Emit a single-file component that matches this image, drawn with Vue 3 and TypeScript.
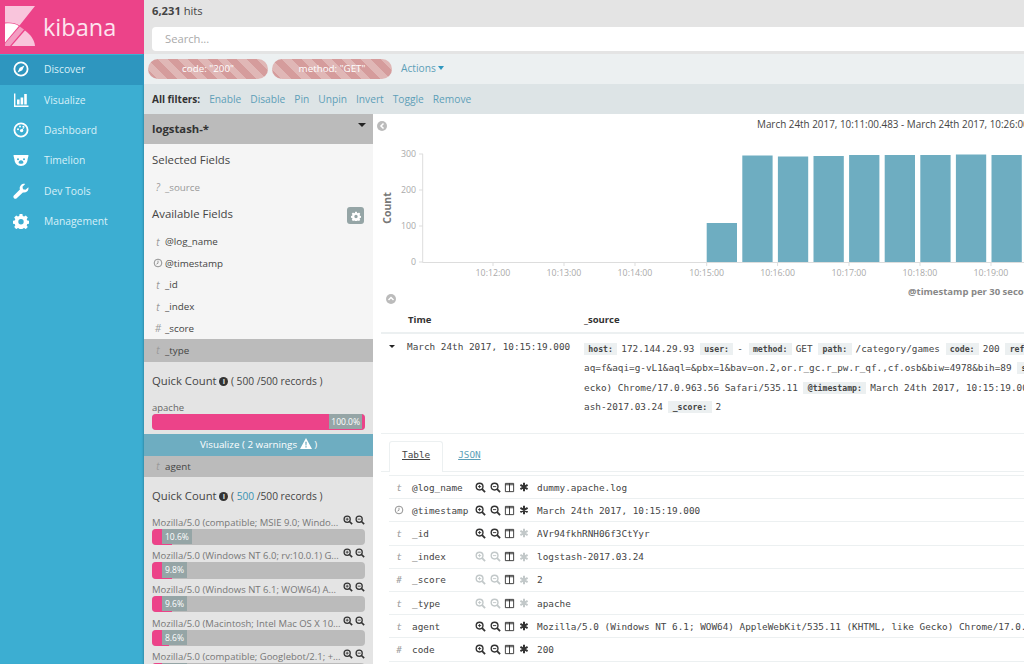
<script setup lang="ts">
const nav = [
  { label: 'Discover', icon: 'i-compass', active: true },
  { label: 'Visualize', icon: 'i-bars', active: false },
  { label: 'Dashboard', icon: 'i-dash', active: false },
  { label: 'Timelion', icon: 'i-bear', active: false },
  { label: 'Dev Tools', icon: 'i-wrench', active: false },
  { label: 'Management', icon: 'i-gear', active: false },
]
const fields = [
  { t: 't', name: '@log_name' },
  { t: 'clock', name: '@timestamp' },
  { t: 't', name: '_id' },
  { t: 't', name: '_index' },
  { t: '#', name: '_score' },
]
const agents = [
  { label: 'Mozilla/5.0 (compatible; MSIE 9.0; Windo...', pct: 10.6, w: 20 },
  { label: 'Mozilla/5.0 (Windows NT 6.0; rv:10.0.1) G...', pct: 9.8, w: 20 },
  { label: 'Mozilla/5.0 (Windows NT 6.1; WOW64) A...', pct: 9.6, w: 20 },
  { label: 'Mozilla/5.0 (Macintosh; Intel Mac OS X 10...', pct: 8.6, w: 17 },
  { label: 'Mozilla/5.0 (compatible; Googlebot/2.1; +...', pct: 8.2, w: 17 },
]
const barData = [
  { x: 706.7, top: 223 },
  { x: 742.3, top: 155.5 },
  { x: 777.9, top: 156.5 },
  { x: 813.5, top: 156 },
  { x: 849.1, top: 155 },
  { x: 884.7, top: 155 },
  { x: 920.3, top: 155 },
  { x: 955.9, top: 154.5 },
  { x: 991.5, top: 155 },
]
const xTicks = [
  { x: 493, l: '10:12:00' },
  { x: 564, l: '10:13:00' },
  { x: 635, l: '10:14:00' },
  { x: 706.7, l: '10:15:00' },
  { x: 777.6, l: '10:16:00' },
  { x: 849, l: '10:17:00' },
  { x: 920, l: '10:18:00' },
  { x: 991, l: '10:19:00' },
]
const yTicks = [
  { y: 154, l: '300' },
  { y: 190, l: '200' },
  { y: 226, l: '100' },
  { y: 262, l: '0' },
]
const rows = [
  { t: 't', name: '@log_name', v: 'dummy.apache.log', zoom: true, star: true },
  { t: 'clock', name: '@timestamp', v: 'March 24th 2017, 10:15:19.000', zoom: true, star: true },
  { t: 't', name: '_id', v: 'AVr94fkhRNH06f3CtYyr', zoom: true, star: false },
  { t: 't', name: '_index', v: 'logstash-2017.03.24', zoom: false, star: false },
  { t: '#', name: '_score', v: '2', zoom: false, star: false },
  { t: 't', name: '_type', v: 'apache', zoom: false, star: false },
  { t: 't', name: 'agent', v: 'Mozilla/5.0 (Windows NT 6.1; WOW64) AppleWebKit/535.11 (KHTML, like Gecko) Chrome/17.0.963.56 Safari/535.11', zoom: true, star: true },
  { t: '#', name: 'code', v: '200', zoom: true, star: true },
]
</script>

<template>
  <svg class="sprite" width="0" height="0" aria-hidden="true">
    <symbol id="i-compass" viewBox="0 0 16 16">
      <circle cx="8" cy="8" r="6.6" fill="none" stroke="currentColor" stroke-width="1.8" />
      <path d="M11.4 4.6 9.3 9.3 4.6 11.4 6.7 6.7Z" fill="currentColor" />
    </symbol>
    <symbol id="i-bars" viewBox="0 0 16 16">
      <path d="M1 1.5V15h14.5v-1.4H2.4V1.5Z" fill="currentColor" />
      <path d="M4 7.5h2.6v5H4ZM7.6 5.5h2.6v7H7.6ZM11.2 2h2.6v10.5h-2.6Z" fill="currentColor" />
    </symbol>
    <symbol id="i-dash" viewBox="0 0 16 16">
      <circle cx="8" cy="8" r="6.6" fill="none" stroke="currentColor" stroke-width="1.8" />
      <circle cx="8.6" cy="8.6" r="1.7" fill="currentColor" />
      <circle cx="5" cy="7.2" r="1" fill="currentColor" />
      <circle cx="7" cy="4.6" r="1" fill="currentColor" />
      <circle cx="10.4" cy="4.8" r="1" fill="currentColor" />
      <path d="M8.6 8.6 11 5.4" stroke="currentColor" stroke-width="1" />
    </symbol>
    <symbol id="i-bear" viewBox="0 0 16 16">
      <path fill-rule="evenodd" fill="currentColor" d="M1 3h14c.4 0 .6.3.5.7l-.9 3.6C14.5 11 12 14 8 14s-6.500-3-6.600-6.700L.5 3.700C.4 3.300.6 3 1 3ZM5 6.200a1 1 0 1 0 0 2 1 1 0 0 0 0-2Zm6 0a1 1 0 1 0 0 2 1 1 0 0 0 0-2ZM8 8.300c-1.500 0-2.400 1.300-2.400 2.500 0 .8 1 1 2.400 1s2.400-.2 2.400-1c0-1.200-.9-2.500-2.400-2.500Z" />
    </symbol>
    <symbol id="i-wrench" viewBox="0 0 16 16">
      <path fill="currentColor" d="M15.400 4.200c.3 1.700-.2 3.300-1.400 4.300-1.100 1-2.700 1.300-4.100.9L3.700 15.300c-.7.7-1.900.7-2.700-.1-.8-.8-.8-2-.1-2.700l6-6.100c-.5-1.500-.1-3.100 1-4.200C9 1.100 10.600.6 12.200 1L9.500 3.800l.5 2.500 2.500.5Z" />
    </symbol>
    <symbol id="i-gear" viewBox="0 0 16 16">
      <path fill="currentColor" fill-rule="evenodd" d="M6.600 1h2.800l.4 2 1.300.6 1.700-1.100 2 2-1.100 1.700.6 1.300 1.900.4v2.800l-1.900.4-.6 1.300 1.100 1.700-2 2-1.700-1.100-1.300.5-.4 2H6.600l-.4-2-1.300-.5-1.700 1.100-2-2 1.100-1.700-.6-1.300-1.900-.4V7.900l1.900-.4.6-1.300-1.100-1.700 2-2 1.700 1.100 1.300-.6ZM8 6a2.700 2.700 0 1 0 0 5.400A2.700 2.700 0 0 0 8 6Z" />
    </symbol>
    <symbol id="i-plus" viewBox="0 0 12 12">
      <circle cx="5" cy="5" r="3.700" fill="none" stroke="currentColor" stroke-width="1.500" />
      <path d="M7.800 7.800 11 11" stroke="currentColor" stroke-width="2" />
      <path d="M3.200 5h3.600M5 3.200v3.600" stroke="currentColor" stroke-width="1" />
    </symbol>
    <symbol id="i-minus" viewBox="0 0 12 12">
      <circle cx="5" cy="5" r="3.700" fill="none" stroke="currentColor" stroke-width="1.500" />
      <path d="M7.800 7.800 11 11" stroke="currentColor" stroke-width="2" />
      <path d="M3.200 5h3.600" stroke="currentColor" stroke-width="1" />
    </symbol>
    <symbol id="i-cols" viewBox="0 0 12 12">
      <path d="M1.500 1.500h9v9h-9ZM6 1.500v9M1.500 3h9" fill="none" stroke="currentColor" stroke-width="1" />
    </symbol>
    <symbol id="i-star" viewBox="0 0 12 12">
      <path d="M6 1v10M1.700 3.500l8.600 5M10.300 3.500l-8.600 5" stroke="currentColor" stroke-width="2.400" />
    </symbol>
    <symbol id="i-clock" viewBox="0 0 12 12">
      <circle cx="6" cy="6" r="4.600" fill="none" stroke="currentColor" stroke-width="1.100" />
      <path d="M6 3.200V6.300L4.200 7.300" fill="none" stroke="currentColor" stroke-width="1" />
    </symbol>
  </svg>

  <div class="app">
    <aside class="side">
      <div class="brand">
        <svg class="logo" width="40" height="54" viewBox="0 0 40 54">
          <path d="M5 6h30L19.500 25.500C16 23 11 22 5 22.500Z" fill="#f9c5dc" />
          <path d="M5 23.500C11 22.700 15.500 23.500 18.800 26L5 42.500Z" fill="#ffffff" />
          <path d="M19.800 26.500 24 29.500 10 46H5v-2.500Z" fill="#f39dc2" />
          <path d="M25 30.500C31 35 34.500 40 35 46H11.500Z" fill="#f9c5dc" />
        </svg>
        <span class="brand-name">kibana</span>
      </div>
      <nav>
        <a v-for="n in nav" :key="n.label" class="nav-item" :class="{ active: n.active }">
          <svg class="nav-ico" width="16" height="16"><use :href="'#' + n.icon" /></svg>
          <span>{{ n.label }}</span>
        </a>
      </nav>
    </aside>

    <main class="main">
      <div class="hits"><b>6,231</b> hits</div>
      <div class="search"><span>Search...</span></div>
      <div class="filters">
        <span class="pill">code: "200"</span>
        <span class="pill">method: "GET"</span>
        <span class="actions">Actions <i class="caret"></i></span>
      </div>
      <div class="allfilters">
        <b>All filters:</b>
        <a>Enable</a><a>Disable</a><a>Pin</a><a>Unpin</a><a>Invert</a><a>Toggle</a><a>Remove</a>
      </div>

      <div class="body">
        <section class="panel">
          <div class="index">logstash-* <i class="index-caret"></i></div>
          <h4 class="selected">Selected Fields</h4>
          <div class="field dim"><span class="ftype">?</span><span>_source</span></div>
          <div class="avail">
            <h4>Available Fields</h4>
            <span class="gearbtn"><svg width="10" height="10"><use href="#i-gear" /></svg></span>
          </div>
          <div v-for="f in fields" :key="f.name" class="field">
            <span class="ftype">
              <svg v-if="f.t === 'clock'" width="10" height="10"><use href="#i-clock" /></svg>
              <template v-else>{{ f.t }}</template>
            </span>
            <span>{{ f.name }}</span>
          </div>
          <div class="field open"><span class="ftype">t</span><span>_type</span></div>
          <div class="quick">
            <div class="qc"><span class="qc-t">Quick Count</span> <span class="info">i</span> ( 500 /500 records )</div>
            <div class="q-label">apache</div>
            <div class="track full"><div class="fill" style="width: 100%"></div><span class="pct">100.0%</span></div>
          </div>
          <div class="visualize">Visualize ( 2 warnings
            <svg class="warn" width="12" height="11" viewBox="0 0 12 11">
              <path fill-rule="evenodd" fill="#fff" d="M6 0 12 11H0ZM5.300 3.800l.2 3.800h1l.2-3.800ZM5.300 8.300v1.300h1.400V8.300Z" />
            </svg> )</div>
          <div class="field open agent"><span class="ftype">t</span><span>agent</span></div>
          <div class="quick q2">
            <div class="qc"><span class="qc-t">Quick Count</span> <span class="info">i</span> ( <em>500</em> /500 records )</div>
            <div v-for="a in agents" :key="a.label" class="agent-row">
              <div class="a-top">
                <span class="a-label">{{ a.label }}</span>
                <svg class="a-ico" width="10" height="10"><use href="#i-plus" /></svg>
                <svg class="a-ico" width="10" height="10"><use href="#i-minus" /></svg>
              </div>
              <div class="track">
                <div class="fill" :style="{ width: a.w + 'px' }"></div>
                <span class="pct left">{{ a.pct }}%</span>
              </div>
            </div>
          </div>
        </section>

        <section class="content">
          <div class="chart-wrap">
            <div class="range">March 24th 2017, 10:11:00.483 - March 24th 2017, 10:26:00.483</div>
            <svg class="chart" width="650" height="188" viewBox="374 114 650 188">
              <circle cx="382" cy="126" r="5" fill="#bbb" />
              <path d="M383.500 123.500 381 126l2.500 2.500" fill="none" stroke="#fff" stroke-width="1.500" />
              <rect v-for="b in barData" :key="b.x" :x="b.x" :y="b.top" width="30.300" :height="262.300 - b.top" fill="#6eadc1" />
              <path d="M422.700 154V262.500H1024" fill="none" stroke="#ddd" stroke-width="1" />
              <g v-for="t in yTicks" :key="t.y">
                <path :d="`M419 ${t.y}h4`" stroke="#ddd" />
                <text :x="416" :y="t.y + 2.500" class="tick" text-anchor="end">{{ t.l }}</text>
              </g>
              <g v-for="t in xTicks" :key="t.x">
                <path :d="`M${t.x} 262v4`" stroke="#ddd" />
                <text :x="t.x" y="275.500" class="tick" text-anchor="middle">{{ t.l }}</text>
              </g>
              <text class="ylabel" transform="translate(391 208) rotate(-90)" text-anchor="middle">Count</text>
              <text class="xlabel" x="908" y="295">@timestamp per 30 seconds</text>
            </svg>
          </div>
          <div class="collapse">
            <svg width="10" height="10" viewBox="0 0 10 10">
              <circle cx="5" cy="5" r="5" fill="#bbb" />
              <path d="M2.500 6 5 3.500 7.500 6" fill="none" stroke="#fff" stroke-width="1.500" />
            </svg>
          </div>
          <div class="thead">
            <span class="th-time">Time</span>
            <span>_source</span>
          </div>
          <div class="doc">
            <i class="row-caret"></i>
            <span class="doc-time">March 24th 2017, 10:15:19.000</span>
            <div class="doc-src">
              <div><b>host:</b> 172.144.29.93 <b>user:</b> - <b>method:</b> GET <b>path:</b> /category/games <b>code:</b> 200 <b>referer:</b> http://www.google.com/</div>
              <div>aq=f&amp;aqi=g-vL1&amp;aql=&amp;pbx=1&amp;bav=on.2,or.r_gc.r_pw.r_qf.,cf.osb&amp;biw=4978&amp;bih=89 <b>size:</b></div>
              <div>ecko) Chrome/17.0.963.56 Safari/535.11 <b>@timestamp:</b> March 24th 2017, 10:15:19.000 <b>_type:</b></div>
              <div>ash-2017.03.24 <b>_score:</b> 2</div>
            </div>
          </div>
          <div class="tabs">
            <a class="tab on">Table</a>
            <a class="tab">JSON</a>
          </div>
          <div class="drows">
            <div v-for="r in rows" :key="r.name" class="drow">
              <span class="d-type">
                <svg v-if="r.t === 'clock'" width="10" height="10"><use href="#i-clock" /></svg>
                <template v-else>{{ r.t }}</template>
              </span>
              <span class="d-name">{{ r.name }}</span>
              <span class="d-icons">
                <svg :class="{ faint: !r.zoom }" width="11" height="11"><use href="#i-plus" /></svg>
                <svg :class="{ faint: !r.zoom }" width="11" height="11"><use href="#i-minus" /></svg>
                <svg width="11" height="11"><use href="#i-cols" /></svg>
                <svg :class="{ faint: !r.star }" width="10" height="10"><use href="#i-star" /></svg>
              </span>
              <span class="d-val">{{ r.v }}</span>
            </div>
          </div>
        </section>
      </div>
    </main>
  </div>
</template>

<style>
html, body { margin: 0; background: #fff; overflow: hidden; }
</style>

<style scoped>
.sprite { position: absolute; }
.app {
  display: flex;
  width: 1024px;
  height: 664px;
  overflow: hidden;
  font-family: "Open Sans", sans-serif;
  font-size: 10.200px;
  color: #444;
}
.side {
  flex: 0 0 144px;
  background: #3caed2;
  box-shadow: inset -2px 0 2px -1px rgba(0, 0, 0, .18);
}
.brand {
  height: 54px;
  background: #ec4389;
  display: flex;
  align-items: flex-start;
}
.logo { flex: none; }
.brand-name {
  margin: 11px 0 0 3px;
  font-size: 23.500px;
  line-height: 32px;
  color: #fde4ef;
}
nav { padding-top: 1px; }
.nav-item {
  height: 30.400px;
  box-sizing: border-box;
  padding: 0 0 2px 13px;
  display: flex;
  align-items: center;
  gap: 15px;
  color: #d8f0f8;
  font-size: 10.300px;
}
.nav-ico { color: #fff; flex: none; }
.nav-item.active { background: #2e96bf; }

.main {
  flex: 1;
  min-width: 0;
  display: flex;
  flex-direction: column;
  height: 664px;
}
.hits {
  height: 27px;
  padding: 3px 0 0 8px;
  box-sizing: border-box;
  background: #e4e4e4;
  line-height: 16px;
  font-size: 11.200px;
}
.search {
  height: 27px;
  box-sizing: border-box;
  background: #e4e4e4;
  padding: 0 0 3px 8px;
}
.search span {
  display: block;
  height: 24px;
  line-height: 24px;
  background: #fff;
  padding-left: 13px;
  border-radius: 4px 0 0 4px;
  color: #aaa;
  font-size: 11.200px;
}
.filters {
  height: 30px;
  box-sizing: border-box;
  background: #ecf0f1;
  padding: 5px 0 0 4px;
  display: flex;
  align-items: flex-start;
  gap: 4px;
}
.pill {
  width: 120px;
  height: 20px;
  line-height: 20px;
  border-radius: 10px;
  text-align: center;
  color: #fff;
  font-size: 9.800px;
  background: repeating-linear-gradient(45deg, #d59c9c 0 7px, #e0b7b6 7px 14px);
}
.actions {
  margin-left: 5px;
  line-height: 18px;
  color: #5d9fb8;
}
.caret {
  display: inline-block;
  border: 3px solid transparent;
  border-top: 4px solid #2f97bf;
  border-bottom: 0;
  border-left-width: 3.500px;
  border-right-width: 3.500px;
  vertical-align: 2px;
}
.allfilters {
  height: 30px;
  box-sizing: border-box;
  background: #dde4e6;
  padding: 0 0 1px 8px;
  display: flex;
  align-items: center;
  gap: 9px;
  color: #5d9fb8;
}
.allfilters b { color: #333; font-size: 10px; }

.body {
  flex: 1;
  display: flex;
  min-height: 0;
}
.panel {
  flex: 0 0 229px;
  background: #f5f5f5;
  overflow: hidden;
}
.index {
  height: 30px;
  line-height: 30px;
  background: #bbb;
  padding-left: 8px;
  font-size: 11.300px;
  font-weight: 700;
  color: #333;
  position: relative;
}
.index-caret {
  position: absolute;
  right: 7px;
  top: 9px;
  border: 4px solid transparent;
  border-top: 4px solid #222;
  border-bottom: 0;
}
h4 { margin: 0; font-weight: 400; font-size: 11.400px; color: #444; line-height: 16px; }
.selected { padding: 8px 0 0 8px; }
.field {
  height: 21.700px;
  display: flex;
  align-items: center;
  padding-left: 7px;
  color: #444;
  font-size: 9.800px;
}
.field.dim { margin-top: 9px; color: #999; height: 20px; }
.ftype {
  width: 14px;
  flex: none;
  font-style: italic;
  font-size: 10px;
  color: #999;
  text-align: center;
  display: flex;
  justify-content: center;
}
.ftype svg { color: #888; }
.avail {
  display: flex;
  justify-content: space-between;
  align-items: center;
  padding: 0 9px 0 8px;
  height: 33.700px;
}
.gearbtn {
  width: 17px;
  height: 17px;
  margin-top: 4px;
  border-radius: 3px;
  background: #95a5a6;
  color: #fff;
  display: flex;
  align-items: center;
  justify-content: center;
}
.field.open { background: #bbb; height: 22.500px; }
.field.open.agent { height: 21.500px; }
.field.open .ftype { color: #999; }
.quick {
  background: #e4e4e4;
  height: 72px;
  box-sizing: border-box;
  padding: 10px 8px 0;
  overflow: hidden;
}
.q2 { height: 300px; }
.qc { font-size: 10.200px; line-height: 18px; }
.qc-t { font-size: 11.300px; }
.qc em { font-style: normal; color: #3a93b3; }
.info {
  display: inline-block;
  width: 9px;
  height: 9px;
  line-height: 9px;
  border-radius: 50%;
  background: #333;
  color: #e4e4e4;
  text-align: center;
  font-size: 7.500px;
  font-weight: 700;
  vertical-align: 1px;
}
.q-label { margin-top: 11px; line-height: 13px; font-size: 9.500px; color: #666; }
.track {
  position: relative;
  height: 16.500px;
  border-radius: 4px;
  background: #bbb;
  overflow: hidden;
}
.fill { position: absolute; left: 0; top: 0; bottom: 0; background: #ec4389; }
.pct {
  position: absolute;
  top: 0;
  bottom: 1px;
  line-height: 15px;
  padding: 0 2px;
  font-size: 8.500px;
  color: #fff;
  background: #95a5a6;
}
.full .pct { right: 3px; }
.pct.left { left: 10px; padding: 0 3px; }
.visualize {
  height: 22px;
  line-height: 22px;
  background: #6eadc1;
  color: #fff;
  text-align: center;
  font-size: 9.800px;
}
.warn { vertical-align: -1px; }
.qc + .agent-row { margin-top: 6.300px; }
.a-top {
  height: 17.200px;
  display: flex;
  align-items: flex-end;
  gap: 2px;
  color: #333;
}
.a-label {
  flex: 1;
  min-width: 0;
  font-size: 9.500px;
  line-height: 12px;
  color: #777;
  white-space: nowrap;
}
.a-ico { flex: none; margin-bottom: 4px; }
.content {
  flex: 1;
  min-width: 0;
  overflow: hidden;
  position: relative;
}
.chart-wrap { position: relative; height: 176px; margin-left: 1px; }
.chart { display: block; }
.range {
  position: absolute;
  left: 383px;
  top: 3px;
  white-space: nowrap;
  font-size: 9.900px;
  color: #444;
}
.tick { font-family: "Open Sans", sans-serif; font-size: 8.800px; fill: #aaa; }
.ylabel { font-family: "Open Sans", sans-serif; font-size: 10.500px; font-weight: 700; fill: #777; }
.xlabel { font-family: "Open Sans", sans-serif; font-size: 9.500px; font-weight: 700; fill: #888; }
.collapse { height: 12px; padding: 4px 0 0 13px; box-sizing: border-box; line-height: 0; }
.thead {
  height: 31px;
  margin: 1px 0 0 8px;
  border-bottom: 2px solid #ecf0f1;
  box-sizing: border-box;
  display: flex;
  align-items: center;
  font-size: 9.500px;
  font-weight: 700;
  color: #333;
  padding-top: 3px;
}
.th-time { width: 176px; margin-left: 27px; }
.doc {
  position: relative;
  margin-left: 8px;
  height: 100px;
  border-bottom: 1px solid #ecf0f1;
  box-sizing: border-box;
  display: flex;
  font-family: "DejaVu Sans Mono", monospace;
  font-size: 9.350px;
  color: #444;
  padding-top: 5px;
}
.row-caret {
  position: absolute;
  left: 8px;
  top: 11px;
  border: 3px solid transparent;
  border-top: 3.500px solid #222;
  border-bottom: 0;
}
.doc-time { width: 177px; margin-left: 26px; flex: none; line-height: 16px; }
.doc-src { white-space: nowrap; line-height: 19.300px; }
.doc-src div { height: 19.300px; }
.doc-src b {
  background: #ecf0f1;
  padding: 1px 4.300px;
  margin-right: -1.600px;
  font-weight: 700;
  font-size: 8.200px;
}
.tabs {
  height: 38px;
  margin-left: 8px;
  padding: 7px 0 0 8px;
  box-sizing: border-box;
  display: flex;
  border-bottom: 1px solid #ecf0f1;
  font-family: "DejaVu Sans Mono", monospace;
  font-size: 9.350px;
  line-height: 26px;
}
.tab {
  padding: 0 12px;
  height: 31px;
  color: #5d9fb8;
  text-decoration: underline;
  border: 1px solid transparent;
  border-bottom: 0;
  box-sizing: border-box;
  margin-bottom: -1px;
}
.tab.on {
  color: #444;
  background: #fff;
  border-color: #ecf0f1;
  border-radius: 3px 3px 0 0;
}
.tab + .tab { margin-left: 2px; }
.drows {
  margin: 3px 0 0 16px;
  border-top: 1px solid #ecf0f1;
}
.drow {
  height: 23.200px;
  display: flex;
  align-items: center;
  border-bottom: 1px solid #ecf0f1;
  box-sizing: border-box;
  font-family: "DejaVu Sans Mono", monospace;
  font-size: 9.350px;
  color: #444;
  white-space: nowrap;
}
.d-type {
  width: 20px;
  margin-right: 3px;
  flex: none;
  font-style: italic;
  color: #999;
  text-align: center;
  display: flex;
  justify-content: center;
}
.d-type svg { color: #888; }
.d-name { width: 63px; flex: none; }
.d-icons {
  flex: none;
  width: 62px;
  display: flex;
  align-items: center;
  gap: 3.600px;
  color: #333;
}
.d-icons svg { flex: none; }
.d-icons .faint { color: #c2c8c9; }
.d-val { flex: none; }
</style>
